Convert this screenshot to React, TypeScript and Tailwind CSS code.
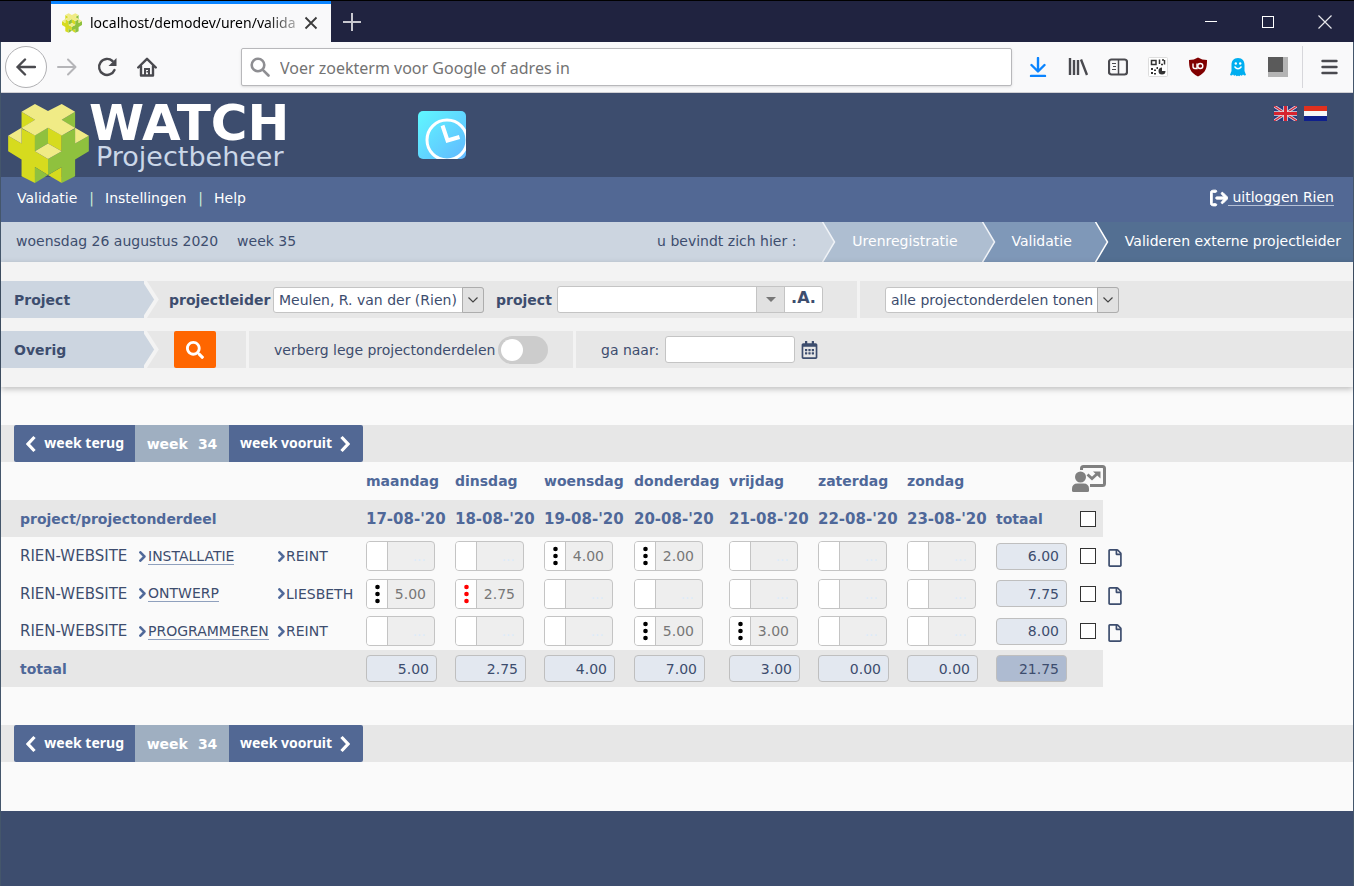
import { useState } from "react";
import type { ReactNode } from "react";
import { FaRegCalendarAlt, FaRegFile, FaSearch } from "react-icons/fa";
import { FaAngleRight, FaArrowRightFromBracket } from "react-icons/fa6";

type Entry = { hours: string; alert?: boolean } | null;

type Row = {
  project: string;
  part: string;
  person: string;
  entries: Entry[];
  total: string;
};

const DAYS = [
  { name: "maandag", date: "17-08-'20", total: "5.00" },
  { name: "dinsdag", date: "18-08-'20", total: "2.75" },
  { name: "woensdag", date: "19-08-'20", total: "4.00" },
  { name: "donderdag", date: "20-08-'20", total: "7.00" },
  { name: "vrijdag", date: "21-08-'20", total: "3.00" },
  { name: "zaterdag", date: "22-08-'20", total: "0.00" },
  { name: "zondag", date: "23-08-'20", total: "0.00" },
];

const ROWS: Row[] = [
  {
    project: "RIEN-WEBSITE",
    part: "INSTALLATIE",
    person: "REINT",
    entries: [null, null, { hours: "4.00" }, { hours: "2.00" }, null, null, null],
    total: "6.00",
  },
  {
    project: "RIEN-WEBSITE",
    part: "ONTWERP",
    person: "LIESBETH",
    entries: [{ hours: "5.00" }, { hours: "2.75", alert: true }, null, null, null, null, null],
    total: "7.75",
  },
  {
    project: "RIEN-WEBSITE",
    part: "PROGRAMMEREN",
    person: "REINT",
    entries: [null, null, null, { hours: "5.00" }, { hours: "3.00" }, null, null],
    total: "8.00",
  },
];

/* ---------- drawings ---------- */

function Logo({ className }: { className: string }) {
  return (
    <svg viewBox="24 312 241 236" className={className} aria-hidden="true">
      <path
        fill="#d6db1e"
        d="M64 335 104 359 64 385ZM24 407 64 430V385L104 405V453L143 476V524L104 500V548L64 528V478L24 453ZM143 383 184 405V453L143 430ZM143 524 184 500V548Z"
      />
      <path
        fill="#8fc13e"
        d="M224 335 184 359 224 385ZM265 407 224 430V385L184 405V453L143 476V524L184 500V548L224 528V478L265 453ZM143 383 104 405V453L143 430ZM143 524 104 500V548Z"
      />
      <path
        fill="#f0eb86"
        d="M104 312 143 333 184 312 224 335 184 359 224 384 184 406 143 383 104 406 64 384 104 359 64 335ZM24 407 64 383V430ZM265 407 224 383V430ZM143 430 184 453 143 476 104 453Z"
      />
    </svg>
  );
}

function ClockBadge() {
  return (
    <svg viewBox="0 0 48 48" className="h-12 w-12" aria-hidden="true">
      <defs>
        <linearGradient id="clock-bg" x1="0" y1="0" x2="1" y2="1">
          <stop offset="0" stopColor="#5ff8ff" />
          <stop offset="1" stopColor="#62b8ff" />
        </linearGradient>
        <clipPath id="clock-clip">
          <rect width="48" height="48" rx="5" />
        </clipPath>
      </defs>
      <g clipPath="url(#clock-clip)">
        <rect width="48" height="48" fill="url(#clock-bg)" />
        <circle cx="29" cy="29" r="20" fill="none" stroke="#fff" strokeWidth="3" />
        <path d="M24.500 14.500 29.500 29.500 41.500 26" fill="none" stroke="#fff" strokeWidth="4" />
      </g>
    </svg>
  );
}

function FlagUk() {
  return (
    <svg viewBox="0 0 23 15" className="h-[15px] w-[23px]" aria-hidden="true">
      <rect width="23" height="15" fill="#2b3a7c" />
      <path d="M0 0 23 15M23 0 0 15" stroke="#d9d9e0" strokeWidth="3" />
      <path d="M0 0 23 15M23 0 0 15" stroke="#d8293a" strokeWidth="1.300" />
      <path d="M11.500 0V15M0 7.500H23" stroke="#e6e0e4" strokeWidth="4.500" />
      <path d="M11.500 0V15M0 7.500H23" stroke="#d8232f" strokeWidth="3" />
    </svg>
  );
}

function FlagNl() {
  return (
    <svg viewBox="0 0 23 15" className="h-[15px] w-[23px]" aria-hidden="true">
      <rect width="23" height="15" fill="#f6f6f6" />
      <rect width="23" height="5" fill="#e0301e" />
      <rect y="10" width="23" height="5" fill="#0f1f8c" />
    </svg>
  );
}

function PresentationIcon() {
  return (
    <svg viewBox="0 0 34 28" className="h-7 w-[34px]" fill="#808080" aria-hidden="true">
      <path d="M9.500 5V3.500Q9.500 1.500 11.500 1.500H30.500Q32.500 1.500 32.500 3.500V18.500Q32.500 20.500 30.500 20.500H18" fill="none" stroke="#808080" strokeWidth="3" />
      <circle cx="8.500" cy="12" r="5.500" />
      <path d="M0 24Q0 18.500 5.500 18.500H11.500Q17 18.500 17 24V25.500Q17 27 15.500 27H1.500Q0 27 0 25.500Z" />
      <path d="M15.500 9.500 20 13.500 25.500 8.500" fill="none" stroke="#808080" strokeWidth="2.800" />
      <path d="M21 6.500H28.500V13.500Z" />
    </svg>
  );
}

function Chevron({ flip }: { flip?: boolean }) {
  return (
    <svg viewBox="0 0 10 18" className="h-[18px] w-2.5" fill="none" stroke="#fff" strokeWidth="3.200" aria-hidden="true">
      <path d={flip ? "M1.500 2 8 9 1.500 16" : "M8.500 2 2 9 8.500 16"} />
    </svg>
  );
}

// Slanted edge between two coloured segments of a bar
function Arrow({ from, to, line, wide }: { from: string; to: string; line: string; wide?: boolean }) {
  return (
    <svg viewBox="0 0 16 40" preserveAspectRatio="none" className="block h-full w-4 shrink-0" aria-hidden="true">
      <rect width="16" height="40" fill={to} />
      <path d="M0 0 12 20 0 40Z" fill={from} />
      <path d="M0 -1 12.500 20 0 41" fill="none" stroke={line} strokeWidth={wide ? 4 : 1.5} />
    </svg>
  );
}

/* ---------- browser window ---------- */

function TitleBar() {
  return (
    <div className="flex h-[42px] border-t border-black bg-[#202340] pr-px">
      <div className="ml-[51px] flex w-[280px] items-center border-t-[3px] border-[#0a84ff] bg-[#f9f9fa] pl-[11px]">
        <Logo className="h-5 w-5 shrink-0" />
        <span className="ml-2 w-[210px] bg-linear-to-r from-black from-80% to-[#c8c8c8] bg-clip-text font-['Noto_Sans'] text-[14px] whitespace-nowrap text-transparent">
          localhost/demodev/uren/valida
        </span>
        <button type="button" aria-label="Tab sluiten" className="ml-1">
          <svg viewBox="0 0 14 14" className="h-[14px] w-[14px]" stroke="#3c3c3c" strokeWidth="1.800">
            <path d="M1.500 1.500 12.500 12.500M12.500 1.500 1.500 12.500" />
          </svg>
        </button>
      </div>
      <button type="button" aria-label="Nieuw tabblad" className="flex w-[42px] items-center justify-center">
        <svg viewBox="0 0 18 18" className="h-[18px] w-[18px]" stroke="#c8c8cf" strokeWidth="2">
          <path d="M9 0V18M0 9H18" />
        </svg>
      </button>
      <div className="ml-auto flex">
        <button type="button" aria-label="Minimaliseren" className="flex w-[57px] items-center justify-center">
          <svg viewBox="0 0 12 12" className="h-3 w-3" stroke="#fff" shapeRendering="crispEdges">
            <path d="M0 5.500H12" />
          </svg>
        </button>
        <button type="button" aria-label="Maximaliseren" className="flex w-[57px] items-center justify-center">
          <span className="h-3 w-3 border border-white" />
        </button>
        <button type="button" aria-label="Sluiten" className="flex w-[57px] items-center justify-center">
          <svg viewBox="0 0 14 14" className="h-[14px] w-[14px]" stroke="#e6e6ea" strokeWidth="1.200">
            <path d="M.5.5 13.500 13.500M13.500.5.5 13.500" />
          </svg>
        </button>
      </div>
    </div>
  );
}

function ToolButton({ label, children }: { label: string; children: ReactNode }) {
  return (
    <button type="button" aria-label={label} className="flex h-10 w-10 shrink-0 items-center justify-center">
      <svg viewBox="0 0 20 20" className="h-5 w-5" fill="none" stroke="#4a4a4f" strokeWidth="2">
        {children}
      </svg>
    </button>
  );
}

function ToolBar() {
  return (
    <div className="flex h-[51px] items-center border-b border-[#d0d0d4] bg-[#f9f9fa] px-1">
      <button
        type="button"
        aria-label="Terug"
        className="flex h-[42px] w-[42px] shrink-0 items-center justify-center rounded-full border border-[#b0b0b3] bg-white"
      >
        <svg viewBox="0 0 20 20" className="h-5 w-5" fill="none" stroke="#4a4a4f" strokeWidth="2.400" strokeLinecap="round" strokeLinejoin="round">
          <path d="M19 10H1.500M9 2.500 1.500 10 9 17.500" />
        </svg>
      </button>
      <ToolButton label="Vooruit">
        <path d="M1 10H18M11 2.500 18.500 10 11 17.500" stroke="#b5b5b8" strokeLinecap="round" strokeLinejoin="round" />
      </ToolButton>
      <ToolButton label="Vernieuwen">
        <path d="M15.500 4A8 8 0 1 0 17.500 13" strokeWidth="2.400" strokeLinecap="round" />
        <path d="M19.500 1V9H11.500Z" fill="#4a4a4f" stroke="none" />
      </ToolButton>
      <ToolButton label="Startpagina">
        <path d="M1.200 10.500 10 1.800 18.800 10.500M4 9V18.500H16V9" strokeWidth="2.400" strokeLinecap="round" strokeLinejoin="round" />
        <path d="M8 18V12H12V18M10.500 14V15.500" />
      </ToolButton>
      <label className="ml-[74px] flex h-[38px] flex-1 items-center rounded-xs border border-[#b8b8bb] bg-white pl-2 shadow-sm">
        <svg viewBox="0 0 20 20" className="h-5 w-5 shrink-0" fill="none" stroke="#8e8e92" strokeWidth="2.600" strokeLinecap="round">
          <circle cx="8" cy="8" r="6.300" />
          <path d="M12.800 12.800 18.500 18.500" />
        </svg>
        <input
          aria-label="Adres"
          placeholder="Voer zoekterm voor Google of adres in"
          className="ml-2.5 min-w-0 flex-1 pt-0.5 font-['Noto_Sans'] text-[16px] text-gray-800 outline-none placeholder:text-[#737373]"
        />
      </label>
      <div className="ml-1.5 flex items-center">
        <ToolButton label="Downloads">
          <path d="M10 1V14M3.500 8 10 14.500 16.500 8M3 19H17" stroke="#0a84ff" strokeWidth="2.400" strokeLinecap="round" strokeLinejoin="round" />
        </ToolButton>
        <ToolButton label="Bibliotheek">
          <path d="M2 1V18M6 3V18M10 3V18M13 2.500 19 18" strokeWidth="2.400" />
        </ToolButton>
        <ToolButton label="Zijbalk">
          <rect x="1" y="2.500" width="18" height="15" rx="2.500" strokeWidth="2.200" />
          <path d="M10.500 3V17" strokeWidth="1.500" />
          <path d="M4 6.500H8M5 9.500H8M4 12.500H8" strokeWidth="1.200" />
        </ToolButton>
        <ToolButton label="QR-code">
          <rect x=".5" y=".5" width="19" height="19" rx="1" fill="#fff" stroke="#ddd" strokeWidth="1" />
          <path d="M3.500 3.500H8V7.500H3.500ZM11.500 2.500V7M14 3H16M16.500 3V7.500M13 7.500H15" stroke="#333" strokeWidth="1.500" />
          <path d="M3 11H5V13H3ZM6 12.500H8V14H6ZM3 15H5V17H3ZM6 16H8V17.500H6ZM8.500 10H10V12H8.500Z" fill="#333" stroke="none" />
          <path d="M14 10.500A3.500 3.500 0 1 0 17.500 14H14Z" fill="#333" stroke="none" />
        </ToolButton>
        <ToolButton label="uBlock Origin">
          <path d="M10 .5Q14 3 19 3C19 11 18 15.500 10 19.500 2 15.500 1 11 1 3Q6 3 10 .5Z" fill="#800000" stroke="none" />
          <path d="M5 6.500V9.500Q5 11.500 7 11.500H9V6.500" stroke="#fff" strokeWidth="1.400" />
          <circle cx="12.300" cy="9" r="2.500" stroke="#fff" strokeWidth="1.400" />
        </ToolButton>
        <ToolButton label="Ghostery">
          <path d="M10 1C5.500 1 3.500 4 3.500 8V14L2 18Q3.500 19 5 17.500 6 19.500 7.500 18 8.500 20 10 18.500 11.500 20 12.500 18 14 19.500 15 17.500 16.500 19 18 18L16.500 14V8C16.500 4 14.500 1 10 1Z" fill="#00aef0" stroke="none" />
          <circle cx="7.800" cy="6.500" r="1.200" fill="#fff" stroke="none" />
          <circle cx="12.200" cy="6.500" r="1.200" fill="#fff" stroke="none" />
          <path d="M6.500 9.500Q10 14 13.500 9.500" stroke="#fff" strokeWidth="1.300" />
        </ToolButton>
        <ToolButton label="Extensie">
          <rect width="20" height="20" fill="#b4b4b4" stroke="none" />
          <path d="M0 0H15V15H0Z" fill="#5a5a5a" stroke="none" />
        </ToolButton>
      </div>
      <div className="mr-1.5 ml-1 h-[42px] w-px bg-[#d7d7db]" />
      <ToolButton label="Menu">
        <path d="M3.500 4H17.500M3.500 10H17.500M3.500 16H17.500" strokeWidth="2.400" strokeLinecap="round" />
      </ToolButton>
    </div>
  );
}

/* ---------- application ---------- */

function AppHeader() {
  return (
    <header>
      <div className="flex h-[84px] items-start bg-[#3d4d6e]">
        <a href="#" className="flex pt-[11px] pl-[7px]">
          <Logo className="h-[79px] w-[81px] shrink-0" />
          <span className="flex w-[201px] flex-col">
            <span className="text-[50px] leading-[38px] font-bold text-white">WATCH</span>
            <span className="ml-[7px] text-[27px] leading-[29px] text-[#cbd7e8]">Projectbeheer</span>
          </span>
        </a>
        <div className="ml-32 pt-[18px]">
          <ClockBadge />
        </div>
        <div className="ml-auto flex gap-[7px] pt-[13px] pr-[26px]">
          <button type="button" aria-label="English">
            <FlagUk />
          </button>
          <button type="button" aria-label="Nederlands">
            <FlagNl />
          </button>
        </div>
      </div>
      <nav className="flex h-[45px] items-center bg-[#526894] pr-[19px] pb-1 pl-4 text-white">
        <a href="#">Validatie</a>
        <span className="mr-[11px] ml-3 text-[#c9efd5]">|</span>
        <a href="#">Instellingen</a>
        <span className="mr-[11px] ml-3 text-[#c9efd5]">|</span>
        <a href="#">Help</a>
        <a href="#" className="ml-auto flex items-center">
          <FaArrowRightFromBracket className="h-[18px] w-[18px] stroke-white stroke-[28]" />
          <span className="border-b border-[#b5c0d6] pl-1 leading-4">uitloggen Rien</span>
        </a>
      </nav>
      <div className="flex h-10 bg-[#ccd5e0] leading-[38px]">
        <span className="pl-[15px]">woensdag 26 augustus 2020</span>
        <span className="ml-[19px]">week 35</span>
        <span className="ml-auto pr-[26px]">u bevindt zich hier :</span>
        <Arrow from="#ccd5e0" to="#aebed1" line="#f0f3f7" />
        <a href="#" className="bg-[#aebed1] pr-6 pl-[14px] text-white">
          Urenregistratie
        </a>
        <Arrow from="#aebed1" to="#7f98b8" line="#f0f3f7" />
        <a href="#" className="bg-[#7f98b8] pr-[23px] pl-[14px] text-white">
          Validatie
        </a>
        <Arrow from="#7f98b8" to="#536f92" line="#fff" />
        <span className="bg-[#536f92] pr-[12px] pl-[14px] text-white">Valideren externe projectleider</span>
      </div>
    </header>
  );
}

function SelectBox({ id, option, width }: { id: string; option: string; width: string }) {
  return (
    <span className={`relative ${width}`}>
      <select
        id={id}
        aria-label={option}
        className="h-[26px] w-full appearance-none rounded-[3px] border border-[#c4c4c4] bg-white pl-[5px] text-[14px] text-[#3d4d6e]"
      >
        <option>{option}</option>
      </select>
      <span className="pointer-events-none absolute top-0 right-0 flex h-[26px] w-[22px] items-center justify-center rounded-r-[3px] border border-[#adadad] bg-[#e1e1e1]">
        <svg viewBox="0 0 10 6" className="h-1.5 w-2.5" fill="none" stroke="#444" strokeWidth="1.200">
          <path d="M.5.5 5 5 9.500.5" />
        </svg>
      </span>
    </span>
  );
}

function FilterRow({ title, children }: { title: string; children: ReactNode }) {
  return (
    <div className="flex h-[37px] bg-[#e7e7e7]">
      <div className="w-[143px] bg-[#ccd5e0] pl-[13px] leading-[38px] font-bold">{title}</div>
      <Arrow from="#ccd5e0" to="#e7e7e7" line="#f3f3f3" wide />
      {children}
    </div>
  );
}

function Filters() {
  const [hideEmpty, setHideEmpty] = useState(false);
  return (
    <form className="flex flex-col gap-[13px] bg-[#f3f3f3] pt-[19px] pb-[19px] shadow-[0_2px_6px_rgba(0,0,0,0.25)]">
      <FilterRow title="Project">
        <div className="flex w-[700px] items-center border-r-[3px] border-[#f3f3f3] pl-[9px]">
          <label htmlFor="leader" className="w-[104px] font-bold">
            projectleider
          </label>
          <SelectBox id="leader" option="Meulen, R. van der (Rien)" width="w-[211px]" />
          <label htmlFor="project" className="ml-3 w-[61px] font-bold">
            project
          </label>
          <div className="flex h-[27px] w-[266px] overflow-hidden rounded-[3px] border border-[#c4c4c4] bg-white">
            <input id="project" className="min-w-0 flex-1 px-1 outline-none" />
            <button
              type="button"
              aria-label="Projecten tonen"
              className="flex w-[29px] items-center justify-center border-x border-[#c4c4c4] bg-[#e1e1e1]"
            >
              <span className="border-x-[5px] border-t-[5px] border-x-transparent border-t-[#777]" />
            </button>
            <button type="button" className="w-[37px] pb-1 text-[16px] leading-5 font-bold">
              .A.
            </button>
          </div>
        </div>
        <div className="flex items-center pl-[25px]">
          <SelectBox id="parts" option="alle projectonderdelen tonen" width="w-[234px]" />
        </div>
      </FilterRow>
      <FilterRow title="Overig">
        <div className="flex w-[89px] border-r-[3px] border-[#f3f3f3] pl-[14px]">
          <button
            type="button"
            aria-label="Zoeken"
            className="flex w-[42px] items-center justify-center rounded-xs bg-[#ff6600] text-white"
          >
            <FaSearch className="h-[18px] w-[18px]" />
          </button>
        </div>
        <label className="flex w-[327px] items-center border-r-[3px] border-[#f3f3f3] pl-[25px]">
          <span className="w-[224px]">verberg lege projectonderdelen</span>
          <input
            type="checkbox"
            role="switch"
            checked={hideEmpty}
            onChange={(e) => setHideEmpty(e.target.checked)}
            className="peer sr-only"
          />
          <span className="flex h-7 w-[50px] items-center rounded-full bg-[#ccc] px-[3px] peer-checked:justify-end peer-checked:bg-[#526894]">
            <span className="h-[22px] w-[22px] rounded-full bg-white" />
          </span>
        </label>
        <div className="flex items-center pl-[25px]">
          <label htmlFor="goto" className="w-[64px] whitespace-nowrap">
            ga naar:
          </label>
          <input id="goto" className="h-[27px] w-[130px] rounded-[3px] border border-[#c4c4c4] bg-white px-1 outline-none" />
          <button type="button" aria-label="Kalender" className="ml-1.5">
            <FaRegCalendarAlt className="h-[18px] w-[17px]" />
          </button>
        </div>
      </FilterRow>
    </form>
  );
}

function WeekNav() {
  return (
    <div className="flex h-[37px] bg-[#e7e7e7] pl-[13px] text-white">
      <button
        type="button"
        className="flex w-[121px] items-center justify-between rounded-l-xs bg-[#526894] pr-[11px] pl-3 font-['Noto_Sans'] font-bold"
      >
        <Chevron />
        <span className="pb-0.5">week terug</span>
      </button>
      <span className="flex w-[94px] items-center justify-center gap-2.5 bg-[#9fafc1] font-bold">
        <span>week</span>
        <span>34</span>
      </span>
      <button
        type="button"
        className="flex w-[134px] items-center justify-between rounded-r-xs bg-[#526894] pr-[13px] pl-[11px] font-['Noto_Sans'] font-bold"
      >
        <span className="pb-0.5">week vooruit</span>
        <Chevron flip />
      </button>
    </div>
  );
}

function HoursCell({ entry, label }: { entry: Entry; label: string }) {
  return (
    <div className="flex h-[30px] w-[69px] overflow-hidden rounded-[4px] border border-[#c4c4c4] bg-[#eee]">
      <button
        type="button"
        aria-label={`Details ${label}`}
        className="flex w-[21px] shrink-0 items-center justify-center border-r border-[#c4c4c4] bg-white"
      >
        {entry && (
          <svg viewBox="0 0 5 20" className="h-5 w-[5px]" fill={entry.alert ? "#f00" : "#000"}>
            <circle cx="2.500" cy="3" r="2.300" />
            <circle cx="2.500" cy="10" r="2.300" />
            <circle cx="2.500" cy="17" r="2.300" />
          </svg>
        )}
      </button>
      <input
        readOnly
        aria-label={label}
        defaultValue={entry?.hours}
        placeholder="..."
        className="w-0 min-w-0 flex-1 pr-2 text-right text-[14px] text-[#777] outline-none placeholder:text-[#dcebfa]"
      />
    </div>
  );
}

function TotalBox({ value, label, grand }: { value: string; label: string; grand?: boolean }) {
  return (
    <input
      readOnly
      aria-label={label}
      defaultValue={value}
      className={`block h-[27px] w-[71px] rounded-[4px] border border-[#bfbfbf] pr-[7px] text-right text-[14px] outline-none ${
        grand ? "bg-[#aebbd1]" : "bg-[#e3e8f0]"
      }`}
    />
  );
}

function Check({ label }: { label: string }) {
  return (
    <input
      type="checkbox"
      aria-label={label}
      className="ml-1.5 block h-4 w-4 appearance-none border border-[#333] bg-white checked:bg-[#526894]"
    />
  );
}

function HoursTable() {
  return (
    <table className="w-[1132px] table-fixed text-left">
      <colgroup>
        <col className="w-[135px]" />
        <col className="w-[140px]" />
        <col className="w-[90px]" />
        <col className="w-[89px]" />
        <col className="w-[89px]" />
        <col className="w-[90px]" />
        <col className="w-[95px]" />
        <col className="w-[89px]" />
        <col className="w-[89px]" />
        <col className="w-[89px]" />
        <col className="w-[78px]" />
        <col className="w-[29px]" />
        <col className="w-[30px]" />
      </colgroup>
      <thead className="text-[#4f6899]">
        <tr className="h-[38px]">
          <td colSpan={3} />
          {DAYS.map((d) => (
            <th key={d.name} scope="col">
              {d.name}
            </th>
          ))}
          <td />
          <td colSpan={2}>
            <button type="button" aria-label="Presentatie" className="-ml-0.5 block pb-1">
              <PresentationIcon />
            </button>
          </td>
        </tr>
        <tr className="h-[37px] *:bg-[#e7e7e7]">
          <th colSpan={3} className="pl-[19px]">
            project/projectonderdeel
          </th>
          {DAYS.map((d) => (
            <th key={d.date} className="text-[15px] whitespace-nowrap">
              {d.date}
            </th>
          ))}
          <th>totaal</th>
          <td>
            <Check label="Alles selecteren" />
          </td>
        </tr>
      </thead>
      <tbody>
        {ROWS.map((row) => (
          <tr key={row.part} className="odd:h-[38px] even:h-[37px]">
            <td className="pl-[19px] text-[15px] whitespace-nowrap">{row.project}</td>
            <td>
              <span className="flex items-center">
                <FaAngleRight className="h-[13px] w-3 stroke-[#4f6899] stroke-[40] text-[#4f6899]" />
                <a href="#" className="border-b border-[#8fa0bd] leading-4">
                  {row.part}
                </a>
              </span>
            </td>
            <td>
              <span className="flex items-center">
                <FaAngleRight className="h-[13px] w-[10px] stroke-[#4f6899] stroke-[40] text-[#4f6899]" />
                {row.person}
              </span>
            </td>
            {row.entries.map((entry, i) => (
              <td key={DAYS[i].name}>
                <HoursCell entry={entry} label={`${row.part} ${DAYS[i].name}`} />
              </td>
            ))}
            <td>
              <TotalBox value={row.total} label={`totaal ${row.part}`} />
            </td>
            <td>
              <Check label={`Selecteer ${row.part}`} />
            </td>
            <td>
              <button type="button" aria-label={`Notitie ${row.part}`} className="mt-1 ml-[5px] block">
                <FaRegFile className="h-[18px] w-[14px]" />
              </button>
            </td>
          </tr>
        ))}
      </tbody>
      <tfoot>
        <tr className="h-[37px] *:bg-[#e7e7e7]">
          <th colSpan={3} className="pl-[19px] text-[#4f6899]">
            totaal
          </th>
          {DAYS.map((d) => (
            <td key={d.name}>
              <TotalBox value={d.total} label={`totaal ${d.name}`} />
            </td>
          ))}
          <td>
            <TotalBox value="21.75" label="totaal week" grand />
          </td>
          <td />
        </tr>
      </tfoot>
    </table>
  );
}

export default function App() {
  return (
    <div className="flex min-h-screen flex-col bg-[#fafafa] font-['DejaVu_Sans',sans-serif] text-[14px] leading-5 text-[#3d4d6e]">
      <TitleBar />
      <div className="flex flex-1 flex-col border-x border-[#44566b]">
        <ToolBar />
        <AppHeader />
        <Filters />
        <main className="pt-[38px] pb-[49px]">
          <WeekNav />
          <HoursTable />
          <div className="pt-[38px]">
            <WeekNav />
          </div>
        </main>
        <footer className="min-h-[75px] flex-1 bg-[#3d4d6e]" />
      </div>
    </div>
  );
}
